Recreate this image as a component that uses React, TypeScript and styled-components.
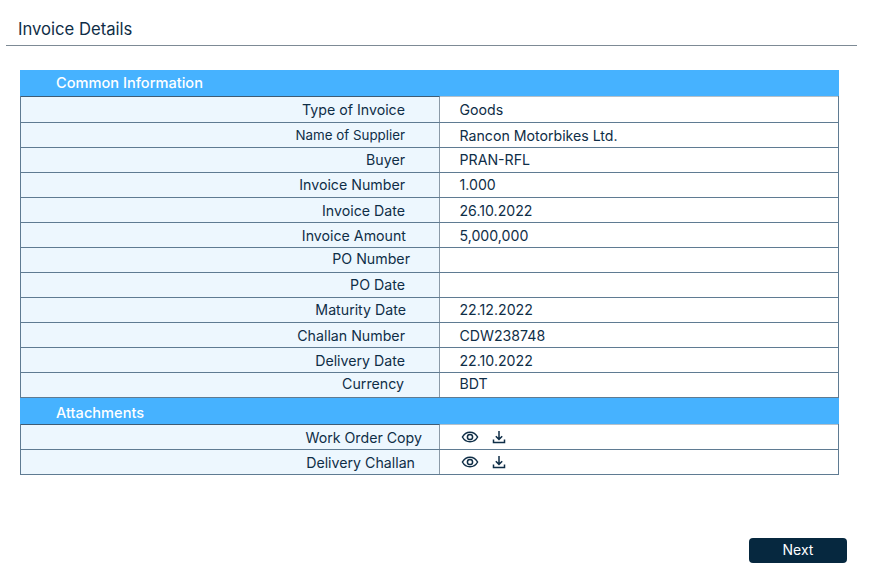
import React from "react";
import styled, { createGlobalStyle } from "styled-components";

const GlobalStyle = createGlobalStyle`
  html, body {
    margin: 0;
    padding: 0;
    background: #fff;
    font-family: "Inter", "Liberation Sans", sans-serif;
    color: #0f2e47;
  }
`;

const Page = styled.div`
  width: 893px;
  height: 575px;
  overflow: hidden;
  padding-top: 18px;
  box-sizing: border-box;
`;

const Title = styled.h1`
  margin: 0 0 0 6px;
  width: 851px;
  box-sizing: border-box;
  height: 28px;
  padding-left: 12px;
  font-size: 16.65px;
  line-height: 23px;
  font-weight: 400;
  border-bottom: 1px solid #7d8a95;
`;

const Table = styled.div`
  width: 819px;
  margin: 24px 0 0 20px;
`;

const Band = styled.div<{ $low?: boolean }>`
  height: 26px;
  box-sizing: border-box;
  background: #46b2ff;
  color: #fff;
  font-size: 14.6px;
  font-weight: 500;
  line-height: ${(p) => (p.$low ? 26 : 25)}px;
  padding-left: 36px;
  padding-top: ${(p) => (p.$low ? 2 : 1)}px;
`;

const Row = styled.div<{ $height: number }>`
  display: grid;
  grid-template-columns: 419px 1fr;
  height: ${(p) => p.$height}px;
  box-sizing: border-box;
  border: 1px solid #5f7b92;
  border-top: none;
`;

const Label = styled.div<{ $right: number; $small?: boolean; $first?: boolean; $nudge?: number }>`
  background: #edf7fe;
  border-right: 1px solid #8b9aa7;
  border-top: ${(p) => (p.$first ? "1px solid #3f5c74" : "none")};
  display: flex;
  align-items: center;
  justify-content: flex-end;
  padding-right: ${(p) => p.$right}px;
  padding-top: ${(p) => Math.max(p.$nudge ?? 0, 0) * 2}px;
  padding-bottom: ${(p) => Math.max(-(p.$nudge ?? 0), 0) * 2}px;
  font-size: ${(p) => (p.$small ? 13.35 : 14.2)}px;
`;

const Value = styled.div<{ $first?: boolean; $nudge?: number }>`
  display: flex;
  align-items: center;
  border-top: ${(p) => (p.$first ? "1px solid #b4c0ca" : "none")};
  padding-left: 19.5px;
  padding-top: ${(p) => Math.max(p.$nudge ?? 0, 0) * 2}px;
  padding-bottom: ${(p) => Math.max(-(p.$nudge ?? 0), 0) * 2}px;
  font-size: 14.15px;
`;

const Icons = styled.div`
  display: flex;
  align-items: center;
  gap: 12px;
  padding-left: 1px;
`;

const Footer = styled.div`
  display: flex;
  justify-content: flex-end;
  width: 847px;
  margin-top: 63px;
`;

const NextButton = styled.button`
  width: 98px;
  height: 25px;
  border: none;
  border-radius: 4px;
  background: #06283f;
  color: #fff;
  font-family: inherit;
  font-size: 14px;
  padding: 0 0 3px;
`;

const EyeIcon = () => (
  <svg width="18" height="18" viewBox="0 0 18 18" fill="none" stroke="#0f2e47" strokeWidth="1.5">
    <path d="M1.4 9C3.2 5.8 5.8 4.2 9 4.2S14.8 5.8 16.6 9C14.8 12.2 12.2 13.8 9 13.8S3.2 12.2 1.4 9Z" />
    <circle cx="9" cy="9" r="2.6" />
  </svg>
);

const DownloadIcon = () => (
  <svg width="16" height="16" viewBox="0 0 16 16" fill="none" stroke="#0f2e47" strokeWidth="1.5">
    <path d="M8 2V10M4.8 7.2L8 10.4L11.2 7.2" />
    <path d="M2.5 10.5V13.5H13.5V10.5" />
  </svg>
);

const common: { label: string; value: string; right: number; small?: boolean; nudge?: number }[] = [
  { label: "Type of Invoice", value: "Goods", right: 34 },
  { label: "Name of Supplier", value: "Rancon Motorbikes Ltd.", right: 34, small: true },
  { label: "Buyer", value: "PRAN-RFL", right: 34, nudge: -0.5 },
  { label: "Invoice Number", value: "1.000", right: 34, nudge: -0.5 },
  { label: "Invoice Date", value: "26.10.2022", right: 34, nudge: 0.5 },
  { label: "Invoice Amount", value: "5,000,000", right: 33, nudge: 0.5 },
  { label: "PO Number", value: "", right: 29, nudge: -1.5 },
  { label: "PO Date", value: "", right: 34, nudge: -0.5 },
  { label: "Maturity Date", value: "22.12.2022", right: 33, nudge: -0.5 },
  { label: "Challan Number", value: "CDW238748", right: 34, nudge: 0.5 },
  { label: "Delivery Date", value: "22.10.2022", right: 34, nudge: 0.5 },
  { label: "Currency", value: "BDT", right: 35, nudge: -1.5 },
];

const attachments = [
  { label: "Work Order Copy", right: 17 },
  { label: "Delivery Challan", right: 24 },
];

export default function App() {
  return (
    <Page>
      <GlobalStyle />
      <Title>Invoice Details</Title>
      <Table>
        <Band>Common Information</Band>
        {common.map((row, i) => (
          <Row key={row.label} $height={i === 0 ? 27 : 25}>
            <Label $right={row.right} $small={row.small} $first={i === 0} $nudge={row.nudge}>{row.label}</Label>
            <Value $first={i === 0} $nudge={row.nudge}>{row.value}</Value>
          </Row>
        ))}
        <Band $low>Attachments</Band>
        {attachments.map((row, i) => (
          <Row key={row.label} $height={i === 0 ? 26 : 25}>
            <Label $right={row.right} $first={i === 0}>{row.label}</Label>
            <Value $first={i === 0}>
              <Icons>
                <EyeIcon />
                <DownloadIcon />
              </Icons>
            </Value>
          </Row>
        ))}
      </Table>
      <Footer>
        <NextButton>Next</NextButton>
      </Footer>
    </Page>
  );
}
